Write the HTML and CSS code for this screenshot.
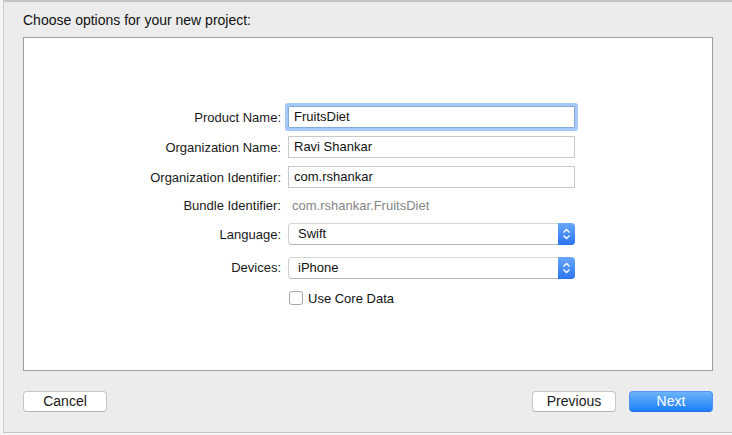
FILE: index.html
```html
<!DOCTYPE html>
<html>
<head>
<meta charset="utf-8">
<link rel="stylesheet" href="styles.css">
</head>
<body>
<div class="screen">
  <div class="edge"></div>
  <div class="window">
    <div class="header">Choose options for your new project:</div>
    <div class="panel">
      <div class="form">
        <label class="label">Product Name:</label>
        <div class="field focused">FruitsDiet</div>

        <label class="label">Organization Name:</label>
        <div class="field">Ravi Shankar</div>

        <label class="label">Organization Identifier:</label>
        <div class="field">com.rshankar</div>

        <label class="label">Bundle Identifier:</label>
        <div class="static">com.rshankar.FruitsDiet</div>

        <label class="label">Language:</label>
        <div class="popup">
          <span class="popup-text">Swift</span>
          <span class="stepper">
            <svg width="9" height="12" viewBox="0 0 9 12"><path d="M1.5 4.5 L4.5 1.5 L7.5 4.5 M1.5 7.5 L4.5 10.5 L7.5 7.5" fill="none" stroke="#fff" stroke-width="1.4"/></svg>
          </span>
        </div>

        <label class="label row-end">Devices:</label>
        <div class="popup row-end">
          <span class="popup-text">iPhone</span>
          <span class="stepper">
            <svg width="9" height="12" viewBox="0 0 9 12"><path d="M1.5 4.5 L4.5 1.5 L7.5 4.5 M1.5 7.5 L4.5 10.5 L7.5 7.5" fill="none" stroke="#fff" stroke-width="1.4"/></svg>
          </span>
        </div>

        <div class="spacer"></div>
        <div class="check row-end"><span class="box"></span><span>Use Core Data</span></div>
      </div>
    </div>
    <div class="footer">
      <button class="btn">Cancel</button>
      <div class="right">
        <button class="btn">Previous</button>
        <button class="btn primary">Next</button>
      </div>
    </div>
  </div>
</div>
</body>
</html>
```

FILE: styles.css
```css
html, body {
  margin: 0;
  padding: 0;
  width: 732px;
  height: 435px;
  overflow: hidden;
  background: #f4f4f4;
  font-family: "Liberation Sans", Arial, sans-serif;
  font-size: 13px;
  color: #1a1a1a;
}

.screen {
  display: flex;
  height: 435px;
}

.edge {
  width: 3px;
  height: 433px;
  background: #f6f6f6;
}

.window {
  flex: 1;
  height: 430px;
  background: #ececec;
  border-left: 1px solid #cdcdcd;
  border-top: 2px solid #c4c4c4;
  border-bottom: 1px solid #c6c6c6;
  display: flex;
  flex-direction: column;
}

.header {
  height: 25px;
  padding: 10px 0 0 19px;
  font-size: 14px;
  line-height: 16px;
  color: #111;
}

.panel {
  margin: 0 19px;
  height: 264px;
  background: #fff;
  border: 1px solid #9d9d9d;
  padding-top: 68px;
}

.form {
  display: grid;
  grid-template-columns: 257px 287px;
  grid-template-rows: 22px 22px 22px 19px 22px 26px 18px;
  column-gap: 7px;
  row-gap: 8px;
}

.label {
  text-align: right;
  align-self: center;
  white-space: nowrap;
  color: #1a1a1a;
}

.label.row-end {
  line-height: 22px;
}

.row-end {
  align-self: end;
}

.field {
  box-sizing: border-box;
  height: 22px;
  border: 1px solid #c9c9c9;
  padding: 0 5px;
  line-height: 20px;
  color: #111;
}

.field.focused {
  border-color: #86a9dc;
  border-radius: 1px;
  box-shadow: 0 0 0 3px #a4c9f7;
}

.static {
  align-self: center;
  padding-left: 4px;
  color: #858585;
}

.popup {
  box-sizing: border-box;
  height: 22px;
  display: flex;
  align-items: stretch;
  border-radius: 4px;
  border-top: 1px solid #d6d6d6;
  border-bottom: 1px solid #b3b3b3;
  border-left: 1px solid #cfcfcf;
  background: #fff;
}

.popup-text {
  flex: 1;
  padding-left: 9px;
  line-height: 20px;
  color: #111;
}

.stepper {
  width: 17px;
  margin: -1px 0;
  border-radius: 0 4px 4px 0;
  background: linear-gradient(#69a8fb, #2b74f6);
  display: flex;
  align-items: center;
  justify-content: center;
}

.check {
  display: flex;
  align-items: center;
  gap: 5px;
  height: 14px;
  padding-left: 1px;
  color: #111;
}

.box {
  box-sizing: border-box;
  width: 14px;
  height: 14px;
  border: 1px solid #a9a9a9;
  border-radius: 3px;
  background: #fff;
}

.footer {
  display: flex;
  justify-content: space-between;
  padding: 20px 19px 0 19px;
}

.right {
  display: flex;
  gap: 13px;
}

.btn {
  box-sizing: border-box;
  width: 84px;
  height: 21px;
  margin: 0;
  padding: 0;
  border: 1px solid #c6c6c6;
  border-bottom-color: #b4b4b4;
  border-radius: 4px;
  background: #fff;
  font-family: "Liberation Sans", Arial, sans-serif;
  font-size: 14px;
  line-height: 19px;
  color: #1a1a1a;
}

.btn.primary {
  border-color: #4f93f5;
  border-bottom-color: #2a6fe6;
  background: linear-gradient(#6cb3fa, #1b7ffa);
  color: #fff;
}
```
